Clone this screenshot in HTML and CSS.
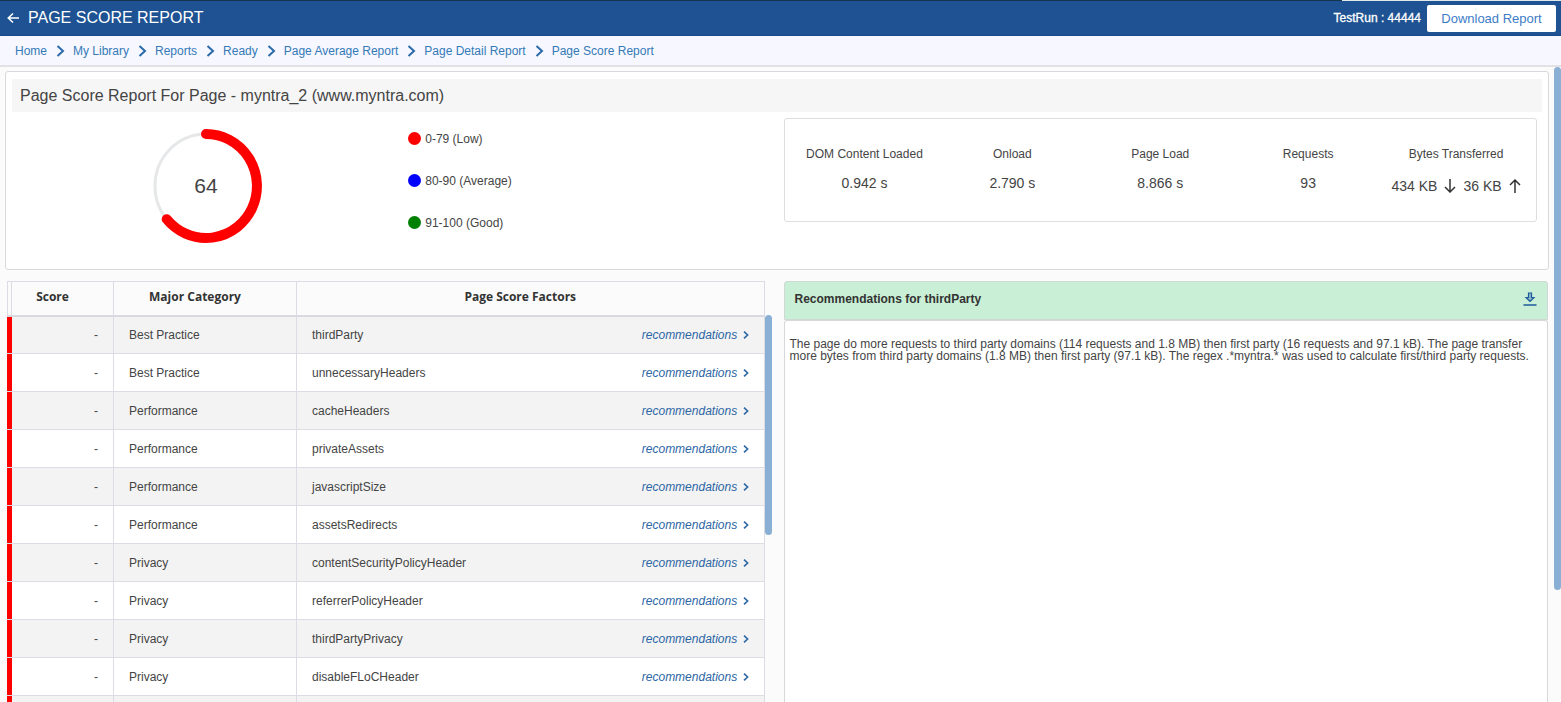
FILE: index.html
```html
<!DOCTYPE html>
<html lang="en">
<head>
    <meta charset="UTF-8">
    <meta name="viewport" content="width=device-width, initial-scale=1.0">
    <title>Page Score Report</title>
    <link rel="stylesheet" href="styles.css">
</head>
<body>
    <header class="top-bar">
        <a href="#" class="back" aria-label="Back">
            <svg width="12" height="12" viewBox="0 0 12 12"><path d="M12 6H1.5M6 1.5L1.3 6L6 10.5" fill="none" stroke="#fff" stroke-width="1.6"/></svg>
        </a>
        <h1>PAGE SCORE REPORT</h1>
        <span class="test-run">TestRun : 44444</span>
        <button type="button" class="download-btn">Download Report</button>
    </header>

    <nav class="breadcrumb" id="breadcrumb"></nav>

    <main class="main">
        <div class="content">
            <!-- Summary -->
            <section class="summary">
                <h2>Page Score Report For Page - myntra_2 (www.myntra.com)</h2>
                <div class="summary-row">
                    <div class="gauge">
                        <svg width="114" height="116" viewBox="0 0 114 116">
                            <ellipse cx="57" cy="58" rx="51" ry="52" fill="none" stroke="#e6e7e8" stroke-width="3"/>
                            <path d="M57 6A51 52 0 1 1 17.7 91.2" fill="none" stroke="#f00" stroke-width="10" stroke-linecap="round"/>
                            <text x="57" y="65" text-anchor="middle" class="gauge-value">64</text>
                        </svg>
                    </div>
                    <ul class="legend">
                        <li><span class="dot low"></span>0-79 (Low)</li>
                        <li><span class="dot average"></span>80-90 (Average)</li>
                        <li><span class="dot good"></span>91-100 (Good)</li>
                    </ul>
                    <dl class="metrics">
                        <div><dt>DOM Content Loaded</dt><dd>0.942 s</dd></div>
                        <div><dt>Onload</dt><dd>2.790 s</dd></div>
                        <div><dt>Page Load</dt><dd>8.866 s</dd></div>
                        <div><dt>Requests</dt><dd>93</dd></div>
                        <div>
                            <dt>Bytes Transferred</dt>
                            <dd class="bytes">
                                434 KB
                                <svg width="12" height="14" viewBox="0 0 12 14"><path d="M6 0V13M1 8L6 13L11 8" fill="none" stroke="#333" stroke-width="1.5"/></svg>
                                36 KB
                                <svg width="12" height="14" viewBox="0 0 12 14"><path d="M6 14V1M1 6L6 1L11 6" fill="none" stroke="#333" stroke-width="1.5"/></svg>
                            </dd>
                        </div>
                    </dl>
                </div>
            </section>

            <div class="details">
                <!-- Score table -->
                <section class="scores">
                    <table>
                        <colgroup>
                            <col class="col-mark">
                            <col class="col-score">
                            <col class="col-category">
                            <col>
                        </colgroup>
                        <thead>
                            <tr><th></th><th>Score</th><th>Major Category</th><th>Page Score Factors</th></tr>
                        </thead>
                        <tbody id="score-rows"></tbody>
                    </table>
                    <div class="table-scroll"></div>
                </section>

                <!-- Recommendations -->
                <section class="recommend">
                    <div class="recommend-head">
                        <h3>Recommendations for thirdParty</h3>
                        <button type="button" class="icon-btn" aria-label="Download">
                            <svg width="14" height="14" viewBox="0 0 14 14"><path d="M5.5 1H8.5V5.5H11L7 9.5L3 5.5H5.5Z" fill="#8fb9c9" stroke="#1c5a9c" stroke-width="1.2"/><path d="M0.5 13H13.5" stroke="#1c5a9c" stroke-width="1.5"/></svg>
                        </button>
                    </div>
                    <div class="recommend-body">
                        <p>The page do more requests to third party domains (114 requests and 1.8 MB) then first party (16 requests and 97.1 kB). The page transfer more bytes from third party domains (1.8 MB) then first party (97.1 kB). The regex .*myntra.* was used to calculate first/third party requests.</p>
                    </div>
                </section>
            </div>
        </div>
        <div class="page-scroll"></div>
    </main>

    <script src="script.js"></script>
</body>
</html>
```

FILE: styles.css
```css
* {
    box-sizing: border-box;
}

body {
    display: flex;
    flex-direction: column;
    height: 100vh;
    margin: 0;
    overflow: hidden;
    background: #fbfbfb;
    color: #444;
    font-family: "Liberation Sans", Arial, sans-serif;
    font-size: 12px;
}

h1, h2, h3, p, ul, dl, dd {
    margin: 0;
    padding: 0;
}

a {
    color: #337ab7;
    text-decoration: none;
}

button {
    font-family: inherit;
    cursor: pointer;
}

/* Header */
.top-bar {
    display: flex;
    flex: none;
    align-items: center;
    height: 36px;
    padding: 1px 5px 0 7px;
    background: linear-gradient(90deg, #17344f 86%, #dfe8ea 86%) top / 100% 1px no-repeat, #1e5292;
    border-bottom: 1px solid #174a88;
    color: #fff;
}

.back {
    display: flex;
    margin-right: 9px;
}

.top-bar h1 {
    flex: 1;
    font-size: 16px;
    font-weight: normal;
}

.test-run {
    margin-right: 6px;
    -webkit-text-stroke: 0.3px #fff;
}

.download-btn {
    width: 129px;
    height: 27px;
    padding: 0;
    border: 0;
    border-radius: 2px;
    background: #fff;
    color: #3e7cc7;
    font-size: 13px;
}

.breadcrumb {
    display: flex;
    flex: none;
    align-items: center;
    height: 31px;
    padding-left: 15px;
    background: #f7f7ff;
    border-bottom: 2px solid #e2e2e6;
}

.breadcrumb svg {
    margin: 0 8px 0 9px;
}

/* Page */
.main {
    display: flex;
    flex: 1;
    align-items: flex-start;
    min-height: 0;
}

.content {
    display: flex;
    flex: 1;
    flex-direction: column;
    height: 100%;
    min-width: 0;
    padding: 4px 5px 0;
}

.page-scroll {
    width: 7px;
    height: 523px;
    border-radius: 4px;
    background: #8aafd5;
}

.summary {
    flex: none;
    height: 199px;
    padding: 7px 6px;
    background: #fff;
    border: 1px solid #d9d9dc;
    border-radius: 3px;
}

.summary h2 {
    padding-left: 8px;
    background: #f6f6f6;
    font-size: 16px;
    font-weight: normal;
    line-height: 33px;
}

.summary-row {
    display: grid;
    grid-template-columns: 1fr 1fr 2fr;
    align-items: start;
    padding: 6px 5px 0 0;
}

.gauge {
    padding: 10px 0 0 6px;
    text-align: center;
}

.gauge-value {
    fill: #444;
    font-size: 21px;
}

.legend {
    display: grid;
    gap: 28px;
    padding: 14px 0 0 15px;
    list-style: none;
    line-height: 14px;
}

.legend li {
    display: flex;
    align-items: flex-start;
    gap: 4px;
}

.dot {
    width: 13px;
    height: 13px;
    border-radius: 50%;
}

.low {
    background: #f00;
}

.average {
    background: #00f;
}

.good {
    background: #008000;
}

.metrics {
    display: grid;
    grid-template-columns: repeat(5, 1fr);
    height: 104px;
    margin-left: 9px;
    padding: 27px 6px 0;
    border: 1px solid #dedee0;
    border-radius: 3px;
    text-align: center;
}

.metrics dt {
    margin-bottom: 13px;
    line-height: 16px;
}

.metrics dd {
    font-size: 14px;
    line-height: 16px;
    white-space: nowrap;
}

.metrics .bytes {
    display: flex;
    align-items: center;
    justify-content: center;
    gap: 7px;
    padding-top: 3px;
}

/* Lower half */
.details {
    display: grid;
    flex: 1;
    grid-template-columns: 1fr 1fr;
    gap: 12px;
    min-height: 0;
    padding: 11px 1px 0 2px;
}

.scores {
    display: flex;
    align-items: flex-start;
    min-height: 0;
}

.scores table {
    flex: 1;
    width: 100%;
    border-collapse: collapse;
    table-layout: fixed;
}

.col-mark {
    width: 4px;
}

.col-score {
    width: 102px;
}

.col-category {
    width: 183px;
}

.scores th,
.scores td {
    border: 1px solid #dcdde4;
}

.scores th {
    height: 34px;
    padding: 0 20px 3px 0;
    border-bottom: 2px solid #d8dae0;
    color: #333;
    font: bold 12px "Open Sans", sans-serif;
}

.scores td {
    height: 38px;
    padding: 0 15px;
}

.scores th:first-child,
.scores td:first-child {
    padding: 0;
}

.scores tbody tr {
    background: #fff;
}

.scores tbody tr:nth-child(odd) {
    background: #f3f3f3;
}

.scores tbody td:first-child {
    border-left-color: #f00;
    border-right-color: #f00;
    background: #f00;
}

.score {
    text-align: right;
}

.factor {
    display: flex;
    align-items: center;
    justify-content: space-between;
}

.factor a {
    color: #2c66a5;
    font-style: italic;
}

.factor svg {
    margin-left: 2px;
}

.table-scroll {
    width: 7px;
    height: 220px;
    margin-top: 34px;
    border-radius: 4px;
    background: #8aafd5;
}

.recommend {
    display: flex;
    flex-direction: column;
}

.recommend-head {
    display: flex;
    align-items: center;
    justify-content: space-between;
    height: 39px;
    padding: 0 10px 4px;
    background: #c9efd6;
    border: 1px solid #cfd8d3;
    border-radius: 3px 3px 0 0;
}

.recommend-head h3 {
    color: #333;
    font-size: 12px;
}

.icon-btn {
    display: flex;
    padding: 0;
    border: 0;
    background: none;
}

.recommend-body {
    flex: 1;
    padding: 17px 5px;
    background: #fff;
    border: 1px solid #d8d8da;
    border-bottom: 0;
    border-radius: 3px 3px 0 0;
    line-height: 12px;
}
```

FILE: script.js
```js
const crumbs = ['Home', 'My Library', 'Reports', 'Ready', 'Page Average Report', 'Page Detail Report', 'Page Score Report'];

const factors = [
    ['Best Practice', 'thirdParty'],
    ['Best Practice', 'unnecessaryHeaders'],
    ['Performance', 'cacheHeaders'],
    ['Performance', 'privateAssets'],
    ['Performance', 'javascriptSize'],
    ['Performance', 'assetsRedirects'],
    ['Privacy', 'contentSecurityPolicyHeader'],
    ['Privacy', 'referrerPolicyHeader'],
    ['Privacy', 'thirdPartyPrivacy'],
    ['Privacy', 'disableFLoCHeader']
];

// Breadcrumb
const separator = '<svg width="9" height="12" viewBox="0 0 9 12"><path d="M1.5 1L7 6L1.5 11" fill="none" stroke="#2a6aa8" stroke-width="2"/></svg>';
document.getElementById('breadcrumb').innerHTML = crumbs.map(name => `<a href="#">${name}</a>`).join(separator);

// Score rows
const chevron = '<svg width="6" height="8" viewBox="0 0 6 8"><path d="M1 0.7L4.6 4L1 7.3" fill="none" stroke="#2c66a5" stroke-width="1.6"/></svg>';
document.getElementById('score-rows').innerHTML = factors.map(([category, factor]) => `
    <tr>
        <td></td>
        <td class="score">-</td>
        <td>${category}</td>
        <td><div class="factor">${factor}<a href="#">recommendations ${chevron}</a></div></td>
    </tr>
`).join('') + '<tr><td></td><td></td><td></td><td></td></tr>';
```
